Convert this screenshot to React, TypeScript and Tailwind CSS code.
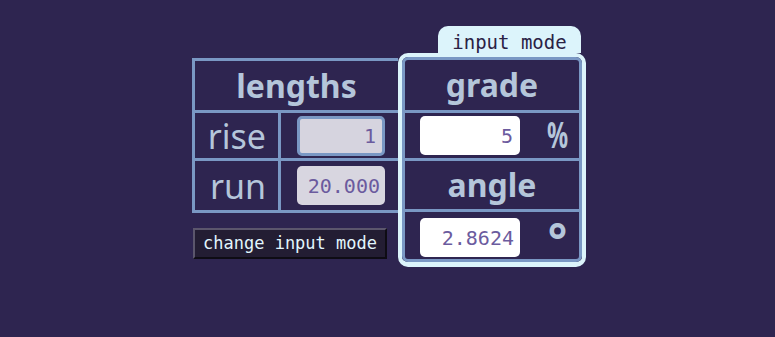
import React from "react";

const sans = { fontFamily: '"Noto Sans", "Open Sans", sans-serif' };
const mono = { fontFamily: '"DejaVu Sans Mono", "Liberation Mono", monospace' };

export default function App() {
  return (
    <div className="w-full h-[337px] bg-[#2e2550] overflow-hidden">
      <div className="flex justify-center pt-[26px] pl-[3px]">
        <div className="flex items-start">
          {/* left */}
          <div className="w-[206px] mt-[32px]">
            <div className="border-t-[3px] border-l-[3px] border-b-[3px] border-[#7a98c4]">
              <div
                className="h-[49px] flex items-center justify-center text-[32px] font-bold text-[#b5c6da] leading-none"
                style={sans}
              >
                lengths
              </div>
              <div className="flex h-[48px] border-t-[3px] border-[#7a98c4]">
                <div
                  className="w-[86px] border-r-[3px] border-[#7a98c4] flex items-center justify-end pr-[12px] text-[34px] text-[#b5c6da] leading-none"
                  style={sans}
                >
                  rise
                </div>
                <div className="flex-1 flex items-center pl-[16px]">
                  <div
                    className="w-[88px] h-[40px] rounded-[5px] border-[3px] border-[#7a98c4] bg-[#d6d4df] flex items-center justify-end pr-[6px] text-[20px] text-[#6b5b9e]"
                    style={mono}
                  >
                    1
                  </div>
                </div>
              </div>
              <div className="flex h-[52px] border-t-[3px] border-[#7a98c4]">
                <div
                  className="w-[86px] border-r-[3px] border-[#7a98c4] flex items-center justify-end pr-[12px] text-[34px] text-[#b5c6da] leading-none"
                  style={sans}
                >
                  run
                </div>
                <div className="flex-1 flex items-center pl-[16px]">
                  <div
                    className="w-[88px] h-[39px] rounded-[5px] bg-[#d8d6e0] flex items-center justify-end pr-[5px] text-[20px] text-[#6b5b9e]"
                    style={mono}
                  >
                    20.000
                  </div>
                </div>
              </div>
            </div>
            <button
              className="mt-[15px] ml-[1px] w-[194px] h-[31px] bg-[#231d33] border-2 border-t-[#5b566c] border-l-[#5b566c] border-b-[#0e0c14] border-r-[#0e0c14] text-[17px] text-[#e2f6fd] flex items-center justify-center leading-none"
              style={mono}
            >
              change input mode
            </button>
          </div>

          {/* right */}
          <div className="w-[188px] flex flex-col">
            <div
              className="ml-[40px] mr-[5px] h-[27px] rounded-t-[10px] bg-[#dcf4fb] flex items-center justify-center text-[19px] text-[#2a2245] pt-[5px]"
              style={mono}
            >
              input mode
            </div>
            <div className="rounded-[10px] border-[4px] border-b-[5px] border-[#dcf4fb]">
              <div className="rounded-[6px] border-[3px] border-[#7a98c4]">
                <div
                  className="h-[50px] flex items-center justify-center text-[32px] font-bold text-[#b5c6da] leading-none"
                  style={sans}
                >
                  grade
                </div>
                <div className="h-[48px] border-t-[3px] border-[#7a98c4] flex items-center pl-[15px]">
                  <div
                    className="w-[100px] h-[39px] rounded-[5px] bg-white flex items-center justify-end pr-[7px] text-[20px] text-[#6b5b9e]"
                    style={mono}
                  >
                    5
                  </div>
                  <div
                    className="ml-[28px] w-[19px] flex justify-center text-[36px] font-bold text-[#b5c6da] leading-none scale-x-[0.65] pb-[2px]"
                    style={sans}
                  >
                    %
                  </div>
                </div>
                <div
                  className="h-[51px] border-t-[3px] border-[#7a98c4] flex items-center justify-center text-[32px] font-bold text-[#b5c6da] leading-none"
                  style={sans}
                >
                  angle
                </div>
                <div className="h-[50px] border-t-[3px] border-[#7a98c4] flex items-start pl-[15px]">
                  <div
                    className="w-[100px] h-[39px] mt-[6px] rounded-[5px] bg-white flex items-center justify-end pr-[6px] text-[20px] text-[#6b5b9e]"
                    style={mono}
                  >
                    2.8624
                  </div>
                  <div
                    className="ml-[28px] w-[19px] h-[30px] flex justify-center text-[46px] font-bold text-[#b5c6da] leading-none mt-[4px]"
                    style={sans}
                  >
                    °
                  </div>
                </div>
              </div>
            </div>
          </div>
        </div>
      </div>
    </div>
  );
}
